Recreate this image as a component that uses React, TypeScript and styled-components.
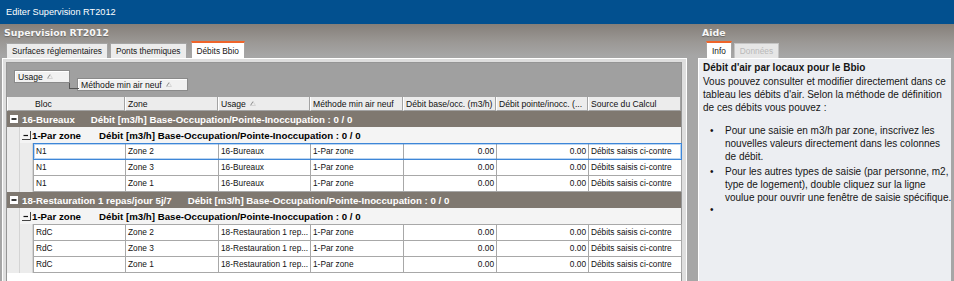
import React from "react";
import styled, { createGlobalStyle } from "styled-components";

const GlobalStyle = createGlobalStyle`
  html, body {
    margin: 0;
    padding: 0;
    background: #a6a6a6;
  }
  body {
    font-family: "Liberation Sans", Arial, sans-serif;
    color: #111;
  }
  * {
    box-sizing: border-box;
  }
`;

const CELL_COLS = "92px 93px 92px 93px 93px 92px 93px";
const HEAD_COLS = "118px 93px 92px 93px 93px 92px 93px";

const Window = styled.div`
  width: 954px;
  height: 281px;
  overflow: hidden;
  display: flex;
  flex-direction: column;
`;

const TitleBar = styled.div`
  height: 24px;
  flex: none;
  display: flex;
  align-items: center;
  padding-left: 6px;
  background: #02508f;
  color: #fff;
  font-size: 9.2px;
`;

const Body = styled.div`
  flex: 1;
  min-height: 0;
  display: flex;
  background: linear-gradient(#857f79 0px, #9b9895 18px, #a6a6a6 32px, #a6a6a6);
`;

const Pane = styled.div<{ $width?: number }>`
  display: flex;
  flex-direction: column;
  width: ${(p) => (p.$width ? `${p.$width}px` : "auto")};
  flex: ${(p) => (p.$width ? "none" : 1)};
  min-width: 0;
`;

const PaneHeading = styled.div<{ $indent: number }>`
  height: 17px;
  line-height: 17px;
  padding-left: ${(p) => p.$indent}px;
  font-family: "DejaVu Sans", Verdana, sans-serif;
  font-weight: bold;
  font-size: 9.4px;
  color: #f6f6f6;
  text-shadow: 0 1px 1px rgba(0, 0, 0, 0.3);
`;

const TabStrip = styled.div<{ $indent: number }>`
  height: 17px;
  display: flex;
  align-items: flex-end;
  gap: 2px;
  padding-left: ${(p) => p.$indent}px;
`;

const Tab = styled.div<{ $active?: boolean; $muted?: boolean }>`
  height: ${(p) => (p.$active ? 17 : 15)}px;
  display: flex;
  align-items: center;
  padding: 0 5px;
  font-size: 8.3px;
  white-space: nowrap;
  color: ${(p) => (p.$muted ? "#b9b9b9" : "#161616")};
  background: ${(p) => (p.$active ? "#fff" : p.$muted ? "#e6e6e6" : "#ececec")};
  border: 1px solid ${(p) => (p.$muted ? "#c4c4c4" : "#a5a5a5")};
  border-bottom: none;
  border-top: ${(p) => (p.$active ? "2px solid #ef642a" : undefined)};
  &:not(:first-child) {
    margin-left: ${(p) => (p.$active ? 2 : 0)}px;
  }
`;

const TabPage = styled.div`
  flex: 1;
  margin-left: 2px;
  width: 685px;
  border: 1px solid #fff;
  border-bottom: none;
  padding: 3px 4px 0 3px;
  background: #dedede;
`;

const GridBox = styled.div`
  height: 100%;
  border: 1px solid #959595;
  border-bottom: none;
  background: #fff;
`;

const GroupByArea = styled.div`
  height: 34px;
  display: flex;
  align-items: flex-start;
  padding: 7px 0 0 7px;
  background: #a0a0a0;
`;

const Chip = styled.div<{ $width: number; $drop?: number }>`
  position: relative;
  width: ${(p) => p.$width}px;
  height: 13px;
  margin-left: ${(p) => (p.$drop ? 7 : 0)}px;
  margin-top: ${(p) => p.$drop ?? 0}px;
  display: flex;
  align-items: center;
  gap: 4px;
  padding-left: 3px;
  font-size: 8.6px;
  color: #111;
  background: #f1f1f1;
  border: 1px solid #8a8a8a;
  box-shadow: inset 1px 1px #fff;
  white-space: nowrap;

  &::before {
    content: ${(p) => (p.$drop ? '""' : "none")};
    position: absolute;
    left: -9px;
    top: 4px;
    width: 9px;
    height: 5px;
    border-left: 1px solid #555;
    border-bottom: 1px solid #555;
  }
`;

const HeaderRow = styled.div`
  display: grid;
  grid-template-columns: ${HEAD_COLS};
  height: 14px;
`;

const HeaderCell = styled.div<{ $pad?: number }>`
  display: flex;
  align-items: center;
  gap: 4px;
  padding-left: ${(p) => p.$pad ?? 2}px;
  font-size: 8.6px;
  white-space: nowrap;
  overflow: hidden;
  background: #ececec;
  border-left: 1px solid #fff;
  border-right: 1px solid #a3a3a3;
  border-bottom: 1px solid #a3a3a3;
`;

const GroupRow = styled.div`
  height: 16px;
  display: flex;
  align-items: center;
  gap: 4px;
  padding-left: 3px;
  background: #7f7870;
  color: #fff;
  font-weight: bold;
  font-size: 9.7px;
  white-space: nowrap;
`;

const SubGroupRow = styled.div`
  height: 16px;
  display: flex;
`;

const Indent = styled.div`
  width: 13px;
  flex: none;
  background: #ececec;
  border-right: 1px solid #d4d4d4;
`;

const SubGroupBody = styled.div`
  flex: 1;
  display: flex;
  align-items: center;
  gap: 1px;
  padding-left: 2px;
  background: #f4f4f4;
  color: #000;
  font-weight: bold;
  font-size: 9.7px;
  white-space: nowrap;
`;

const Detail = styled.span<{ $gap: number }>`
  margin-left: ${(p) => p.$gap}px;
`;

const DataRow = styled.div`
  display: flex;
`;

const Cells = styled.div<{ $focused?: boolean; $first?: boolean }>`
  position: relative;
  display: grid;
  grid-template-columns: ${CELL_COLS};
  border-left: 1px solid #a8a8a8;
  border-top: ${(p) => (p.$first ? "1px solid #a8a8a8" : "none")};

  &::after {
    content: ${(p) => (p.$focused ? '""' : "none")};
    position: absolute;
    inset: -1px 0 0 -1px;
    border: 1px solid #3d86d8;
    box-shadow: inset 0 0 0 1px rgba(61, 134, 216, 0.35);
    pointer-events: none;
  }
`;

const Cell = styled.div<{ $num?: boolean }>`
  height: 16px;
  padding: 0 2px;
  line-height: 15px;
  font-size: 8.3px;
  text-align: ${(p) => (p.$num ? "right" : "left")};
  white-space: nowrap;
  overflow: hidden;
  background: #fff;
  border-right: 1px solid #a8a8a8;
  border-bottom: 1px solid #a8a8a8;
`;

const HelpPanel = styled.div`
  flex: 1;
  margin: 0 3px 0 4px;
  padding: 2px 4px 0 4px;
  background: #eceef2;
  border-left: 1px solid #fff;
  border-top: 1px solid #fff;
  font-size: 10px;
  line-height: 13px;
  color: #151515;
`;

const HelpTitle = styled.div`
  font-weight: bold;
`;

const HelpText = styled.p`
  margin: 1px 0 0;
  white-space: nowrap;
`;

const BulletList = styled.ul`
  list-style: none;
  margin: 10px 0 0;
  padding: 0;
`;

const Bullet = styled.li<{ $empty?: boolean }>`
  display: flex;
  min-height: 13px;
  margin-top: ${(p) => (p.$empty ? -1 : 2)}px;
  white-space: nowrap;
  &:first-child {
    margin-top: 0;
  }
  &::before {
    content: "•";
    width: 15px;
    flex: none;
    padding-left: 7px;
  }
`;

const SortGlyph = () => (
  <svg width="6" height="5" viewBox="0 0 6 5">
    <path d="M0.5 4.5 L3 0.5" stroke="#8c8c8c" fill="none" />
    <path d="M3 0.5 L5.5 4.5 L0.5 4.5" stroke="#d4d4d4" fill="none" />
  </svg>
);

const GroupToggle = () => (
  <svg width="8" height="8" viewBox="0 0 8 8" style={{ flex: "none" }}>
    <rect x="0" y="0" width="8" height="8" fill="#fff" />
    <rect x="1.5" y="3" width="5" height="2" fill="#3a3a3a" />
  </svg>
);

const SubToggle = () => (
  <svg width="9" height="9" viewBox="0 0 9 9" style={{ flex: "none" }}>
    <rect x="0" y="0" width="9" height="9" fill="#f4f4f4" />
    <path d="M8.5 0 V8.5 H0" stroke="#444" fill="none" />
    <path d="M1.5 4.5 H6" stroke="#111" strokeWidth="1.2" />
  </svg>
);

const DETAIL = "Débit [m3/h] Base-Occupation/Pointe-Inoccupation : 0 / 0";

const groups = [
  { label: "16-Bureaux", bloc: "N1", usage: "16-Bureaux" },
  {
    label: "18-Restauration 1 repas/jour 5j/7",
    bloc: "RdC",
    usage: "18-Restauration 1 rep...",
  },
];

const zones = ["Zone 2", "Zone 3", "Zone 1"];

const headers = [
  "Zone",
  "Usage",
  "Méthode min air neuf",
  "Débit base/occ. (m3/h)",
  "Débit pointe/inocc. (...",
  "Source du Calcul",
];

const App = () => {
  return (
    <>
      <GlobalStyle />
      <Window>
        <TitleBar>Editer Supervision RT2012</TitleBar>
        <Body>
          <Pane $width={694}>
            <PaneHeading $indent={4}>Supervision RT2012</PaneHeading>
            <TabStrip $indent={6}>
              <Tab>Surfaces réglementaires</Tab>
              <Tab>Ponts thermiques</Tab>
              <Tab $active>Débits Bbio</Tab>
            </TabStrip>
            <TabPage>
              <GridBox>
                <GroupByArea>
                  <Chip $width={56}>
                    Usage <SortGlyph />
                  </Chip>
                  <Chip $width={111} $drop={8}>
                    Méthode min air neuf <SortGlyph />
                  </Chip>
                </GroupByArea>

                <HeaderRow>
                  <HeaderCell $pad={27}>Bloc</HeaderCell>
                  {headers.map((h) => (
                    <HeaderCell key={h}>
                      {h}
                      {h === "Usage" && <SortGlyph />}
                    </HeaderCell>
                  ))}
                </HeaderRow>

                {groups.map((g) => (
                  <React.Fragment key={g.label}>
                    <GroupRow>
                      <GroupToggle />
                      {g.label}
                      <Detail $gap={12}>{DETAIL}</Detail>
                    </GroupRow>
                    <SubGroupRow>
                      <Indent />
                      <SubGroupBody>
                        <SubToggle />
                        1-Par zone
                        <Detail $gap={17}>{DETAIL}</Detail>
                      </SubGroupBody>
                    </SubGroupRow>
                    {zones.map((z, i) => (
                      <DataRow key={z}>
                        <Indent />
                        <Indent />
                        <Cells $first={i === 0} $focused={g.bloc === "N1" && i === 0}>
                          <Cell>{g.bloc}</Cell>
                          <Cell>{z}</Cell>
                          <Cell>{g.usage}</Cell>
                          <Cell>1-Par zone</Cell>
                          <Cell $num>0.00</Cell>
                          <Cell $num>0.00</Cell>
                          <Cell>Débits saisis ci-contre</Cell>
                        </Cells>
                      </DataRow>
                    ))}
                  </React.Fragment>
                ))}
              </GridBox>
            </TabPage>
          </Pane>

          <Pane>
            <PaneHeading $indent={8}>Aide</PaneHeading>
            <TabStrip $indent={12}>
              <Tab $active>Info</Tab>
              <Tab $muted>Données</Tab>
            </TabStrip>
            <HelpPanel>
              <HelpTitle>Débit d'air par locaux pour le Bbio</HelpTitle>
              <HelpText>
                Vous pouvez consulter et modifier directement dans ce
                <br />
                tableau les débits d'air. Selon la méthode de définition
                <br />
                de ces débits vous pouvez :
              </HelpText>
              <BulletList>
                <Bullet>
                  <span>
                    Pour une saisie en m3/h par zone, inscrivez les
                    <br />
                    nouvelles valeurs directement dans les colonnes
                    <br />
                    de débit.
                  </span>
                </Bullet>
                <Bullet>
                  <span>
                    Pour les autres types de saisie (par personne, m2,
                    <br />
                    type de logement), double cliquez sur la ligne
                    <br />
                    voulue pour ouvrir une fenêtre de saisie spécifique.
                  </span>
                </Bullet>
                <Bullet $empty />
              </BulletList>
            </HelpPanel>
          </Pane>
        </Body>
      </Window>
    </>
  );
};

export default App;
